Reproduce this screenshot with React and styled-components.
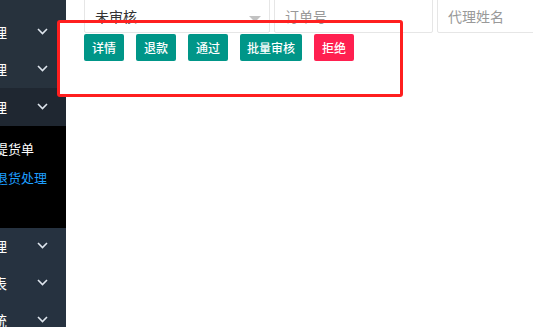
import React from 'react';
import styled, { createGlobalStyle } from 'styled-components';

const GlobalStyle = createGlobalStyle`
  html, body {
    margin: 0;
    padding: 0;
    background: #fff;
    overflow: hidden;
  }
  body {
    font-family: "Noto Sans CJK SC", "Noto Sans", sans-serif;
  }
`;

const Page = styled.div`
  position: relative;
  display: flex;
  width: 533px;
  height: 327px;
  overflow: hidden;
`;

const Sidebar = styled.nav`
  flex: 0 0 66px;
  display: flex;
  flex-direction: column;
  padding-top: 13px;
  background: #27323d;
  overflow: hidden;
`;

const NavRow = styled.div`
  position: relative;
  display: flex;
  align-items: center;
  flex: 0 0 ${p => p.$h || 37.5}px;
  background: ${p => (p.$open ? '#1f2731' : 'transparent')};
  color: #fff;
  font-size: 14px;
`;

const NavLabel = styled.span`
  margin-left: -49px;
  width: 80px;
  white-space: nowrap;
  line-height: 1;
`;

const Chevron = styled.svg`
  position: absolute;
  left: 37px;
  top: 50%;
  margin-top: -4px;
  width: 11px;
  height: 7px;
`;

const SubMenu = styled.div`
  flex: 0 0 102px;
  display: flex;
  flex-direction: column;
  padding-top: 8px;
  background: #000;
  box-sizing: border-box;
`;

const SubItem = styled.div`
  height: 29px;
  display: flex;
  align-items: center;
  margin-left: -5px;
  font-size: 13px;
  white-space: nowrap;
  color: ${p => (p.$active ? '#1e9fff' : '#fff')};
`;

const BottomGroup = styled.div`
  display: flex;
  flex-direction: column;
  background: #263240;
  flex: 1;
`;

const Main = styled.main`
  flex: 1;
  display: flex;
  flex-direction: column;
  padding-left: 18px;
  gap: 1px;
`;

const FilterRow = styled.div`
  display: flex;
  gap: 4px;
  margin-top: -5px;
`;

const Field = styled.div`
  position: relative;
  flex: 0 0 ${p => p.$w}px;
  height: 38px;
  box-sizing: border-box;
  border: 1px solid #e6e6e6;
  border-radius: 2px;
  display: flex;
  align-items: center;
  padding: 3px 10px 0;
  font-size: 14px;
  color: ${p => (p.$placeholder ? '#999' : '#333')};
  white-space: nowrap;
  background: #fff;
`;

const Caret = styled.span`
  position: absolute;
  right: 8px;
  top: 20px;
  width: 0;
  height: 0;
  border-left: 6px solid transparent;
  border-right: 6px solid transparent;
  border-top: 6px solid #c2c2c2;
`;

const Toolbar = styled.div`
  display: flex;
  gap: 12px;
`;

const Button = styled.button`
  min-width: 40px;
  height: 27px;
  padding: 0 7px;
  border: none;
  border-radius: 2px;
  background: ${p => (p.$danger ? '#ff2050' : '#009688')};
  color: #fff;
  font-family: inherit;
  font-size: 12px;
  font-weight: 500;
  line-height: 27px;
  white-space: nowrap;
`;

const Highlight = styled.div`
  position: absolute;
  left: 57px;
  top: 20px;
  width: 346px;
  height: 77px;
  box-sizing: border-box;
  border: 3px solid #ff1f1f;
  border-radius: 3px;
  background: linear-gradient(to right, #fff 6px, transparent 6px);
  pointer-events: none;
`;

const down = (
  <Chevron viewBox="0 0 11 7">
    <polyline points="1,1 5.5,5.5 10,1" fill="none" stroke="#dfe6ee" strokeWidth="1.6" />
  </Chevron>
);

const topMenus = ['商品管理', '代理管理'];
const bottomMenus = ['财务管理', '数据报表', '权限系统'];

export default function App() {
  return (
    <Page>
      <GlobalStyle />
      <Sidebar>
        {topMenus.map(m => (
          <NavRow key={m}>
            <NavLabel>{m}</NavLabel>
            {down}
          </NavRow>
        ))}
        <NavRow $open>
          <NavLabel>订单管理</NavLabel>
          {down}
        </NavRow>
        <SubMenu>
          <SubItem>提货单</SubItem>
          <SubItem $active>退货处理</SubItem>
        </SubMenu>
        <BottomGroup>
          {bottomMenus.map(m => (
            <NavRow key={m} $h={37}>
              <NavLabel>{m}</NavLabel>
              {down}
            </NavRow>
          ))}
        </BottomGroup>
      </Sidebar>
      <Main>
        <FilterRow>
          <Field $w={186}>
            未审核
            <Caret />
          </Field>
          <Field $w={159} $placeholder>订单号</Field>
          <Field $w={160} $placeholder>代理姓名</Field>
        </FilterRow>
        <Toolbar>
          <Button>详情</Button>
          <Button>退款</Button>
          <Button>通过</Button>
          <Button>批量审核</Button>
          <Button $danger>拒绝</Button>
        </Toolbar>
      </Main>
      <Highlight />
    </Page>
  );
}
